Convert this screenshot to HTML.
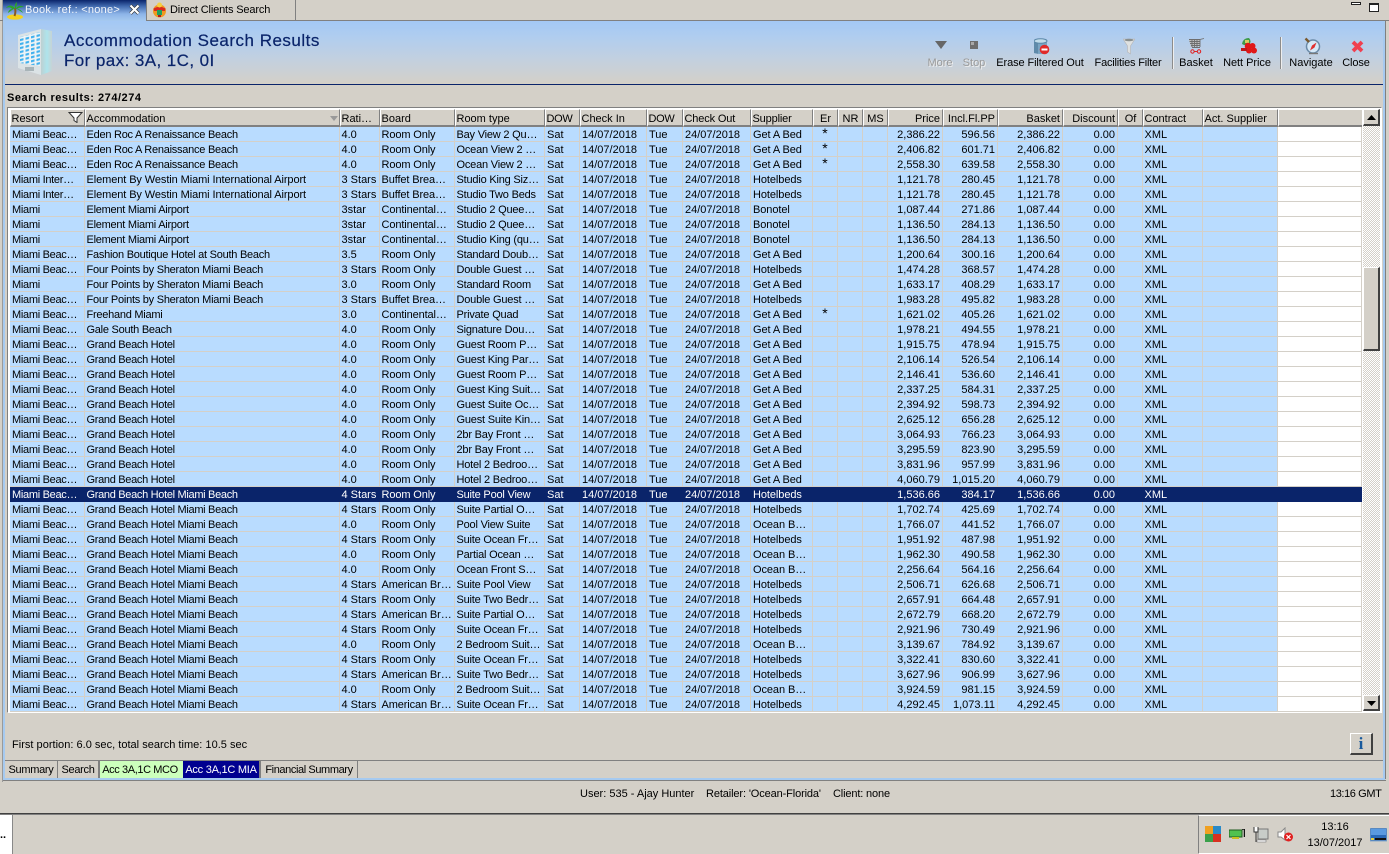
<!DOCTYPE html>
<html><head><meta charset="utf-8"><title>Accommodation Search Results</title>
<style>
html,body{margin:0;padding:0;width:1389px;height:854px;overflow:hidden;background:#d4d0c8;font:11px/14px "Liberation Sans",sans-serif;color:#000}
div,span,svg{position:absolute;display:block}
.t{white-space:nowrap}
.c{text-align:center}
.dis{color:#9a9a9a;text-shadow:1px 1px 0 #eee}
table{position:absolute;left:10px;top:109px;table-layout:fixed;border-collapse:separate;border-spacing:0;width:1352px}
td,th{box-sizing:border-box;white-space:nowrap;font-weight:normal;text-align:left;vertical-align:top}
th{height:18px;background:#d4d0c8;border-top:1px solid #fff;border-left:1px solid #fff;border-right:1px solid #808080;border-bottom:2px solid #808080;line-height:12px;padding:3px 0 0 .5px}
th.d{letter-spacing:-.3px}
th.n{letter-spacing:-.15px}
td{height:15px;background:#b9dcff;border-right:1px solid #d4d0c8;border-bottom:1px solid #d4d0c8;line-height:12px;padding:2px 0 0 2px}
td:nth-child(1){letter-spacing:-.3px}
td:nth-child(2){padding-left:1.5px;letter-spacing:-.25px}
td:nth-child(3){padding-left:1.5px}
td:nth-child(4){padding-left:1.5px;letter-spacing:-.12px}
td:nth-child(5){padding-left:1.5px;letter-spacing:-.2px}
td:nth-child(10){letter-spacing:-.08px}
td:nth-child(19){padding-left:1.5px}
td:nth-child(n+14):nth-child(-n+17){text-align:right;padding:2px 2px 0 0}
th.r{text-align:right;padding:3px 2px 0 0}
td:nth-child(11){text-align:center;padding:0;font-size:14px;line-height:13px}
th.m{text-align:center;padding:3px 0 0}
td:nth-child(21){background:#fff}
th:last-child{border-right:0}
tr.s td{background:#0a246a;color:#fff;border-right-color:#0a246a;border-bottom-color:#0a246a}
.w{letter-spacing:-.09px!important}
.g{letter-spacing:-.31px!important}
.btn{box-sizing:border-box;background:#d4d0c8;border-top:1px solid #fff;border-left:1px solid #fff;border-right:2px solid #404040;border-bottom:2px solid #404040}
.tab{top:761px;height:17px;line-height:19px;text-align:center;box-sizing:border-box;border-right:1px solid #808080;white-space:nowrap}
</style></head><body>

<!-- window chrome -->
<div style="left:2px;top:0;width:1px;height:782px;background:#9a9a9a"></div>
<div style="left:0;top:20px;width:1389px;height:1px;background:#808080"></div>
<div style="left:3px;top:21px;width:2px;height:758px;background:#a6caf0"></div>
<div style="left:1383px;top:21px;width:2px;height:758px;background:#a6caf0"></div>
<div style="left:1385px;top:21px;width:1px;height:758px;background:#808080"></div>
<div style="left:3px;top:778px;width:1382px;height:2px;background:#a6caf0"></div>
<div style="left:3px;top:780px;width:1383px;height:1px;background:#808080"></div>

<!-- tabs -->
<div style="left:3px;top:0;width:143px;height:21px;background:linear-gradient(#0a246a 0,#3f68ad 6px,#8db4e8 14px,#a6caf0 21px)"></div>
<svg style="left:5px;top:1px" width="22" height="20" viewBox="0 0 22 20"><ellipse cx="10" cy="16" rx="8" ry="2.6" fill="#f2d21e"/><path d="M10 7 Q11 11 9.500 15" stroke="#8a5a20" stroke-width="2" fill="none"/><path d="M10 7 Q5 2 1 7 Q5 5 7 8 Q4 8 3 12 Q7 9 10 7 Q9 3 12 1 Q12 4 11 7 Q15 3 19 6 Q15 6 12 8 Q16 8 18 12 Q14 9 10 7Z" fill="#2aa52a"/></svg>
<div class="t" style="left:25px;top:3px;color:#f2f6fc;letter-spacing:.25px">Book. ref.: &lt;none&gt;</div>
<svg style="left:128px;top:3px" width="13" height="13" viewBox="0 0 13 13"><path d="M2.500 2.500L10.500 10.500M10.500 2.500L2.500 10.500" stroke="#333" stroke-width="3.400"/><path d="M2.500 2.500L10.500 10.500M10.500 2.500L2.500 10.500" stroke="#fff" stroke-width="2.200"/></svg>
<div style="left:146px;top:0;width:150px;height:20px;box-sizing:border-box;border-left:1px solid #808080;border-right:1px solid #808080"></div>
<svg style="left:152px;top:2px" width="15" height="16" viewBox="0 0 15 16"><circle cx="7.500" cy="9" r="6.500" fill="#f09a20"/><path d="M1.500 6.500Q7.500 3 13.500 6.500L13 9H2Z" fill="#d92a20"/><rect x="5" y="8" width="5" height="5" fill="#20a060"/><circle cx="7.500" cy="3" r="2.500" fill="#f6d040"/><rect x="6" y="13" width="3" height="2" fill="#b02020"/></svg>
<div class="t" style="left:170px;top:3px;letter-spacing:-.15px">Direct Clients Search</div>
<div style="left:1351px;top:2px;width:8px;height:1px;border:1px solid #222;background:#fff"></div>
<div style="left:1369px;top:3px;width:8px;height:6px;border:1px solid #222;border-top:2px solid #222;background:#fff"></div>

<!-- header band -->
<div style="left:5px;top:21px;width:1378px;height:63px;background:linear-gradient(#a3c8f5 0,#b0cdef 25%,#c2d0e0 60%,#d4d0c8 100%)"></div>
<div style="left:5px;top:84px;width:1378px;height:1px;background:#0a246a"></div>
<svg style="left:17px;top:27px" width="37" height="49" viewBox="0 0 37 49"><defs><pattern id="win" width="5.500" height="4" patternUnits="userSpaceOnUse" patternTransform="translate(3 4) skewY(-14)"><rect width="5.500" height="4" fill="#eef3f5"/><rect width="3.500" height="2.200" fill="#3fb0ee"/></pattern><linearGradient id="sd" x1="0" x2="1"><stop offset="0" stop-color="#bdd0d2"/><stop offset=".55" stop-color="#aee4ec"/><stop offset="1" stop-color="#c6d3d5"/></linearGradient></defs><path d="M1 8L24 2V48L1 41Z" fill="#dbe3e6"/><path d="M3 10L23 5V39L3 36Z" fill="url(#win)"/><path d="M24 2L35 4V44L24 48Z" fill="url(#sd)"/><rect x="8" y="40" width="9" height="4" fill="#a8b4b8"/></svg>
<div class="t" style="left:64px;top:31px;font-size:17px;line-height:20px;color:#0a246a;letter-spacing:.5px;-webkit-text-stroke:.2px #0a246a">Accommodation Search Results</div>
<div class="t" style="left:64px;top:51px;font-size:17px;line-height:20px;color:#0a246a;letter-spacing:.42px;-webkit-text-stroke:.2px #0a246a">For pax: 3A, 1C, 0I</div>

<!-- toolbar icons -->
<svg style="left:935px;top:41px" width="13" height="9" viewBox="0 0 13 9"><path d="M0 0H12L6 8Z" fill="#666"/></svg>
<svg style="left:970px;top:41px" width="8" height="8" viewBox="0 0 8 8"><rect width="8" height="8" fill="#6e6e6e"/><rect x="1" y="1" width="3" height="3" fill="#a8a8a8"/></svg>
<svg style="left:1034px;top:38px" width="16" height="17" viewBox="0 0 16 17"><path d="M0 3H13V15Q6.500 17 0 15Z" fill="#7aa4c2"/><path d="M0 3H4V15.700Q2 15.500 0 15Z" fill="#5f8aaa"/><ellipse cx="6.500" cy="3" rx="6.500" ry="2.300" fill="#c2dcea" stroke="#5a87a8"/><circle cx="10.500" cy="11.500" r="4.800" fill="#e02a2a"/><rect x="7.500" y="10.500" width="6" height="2" fill="#fff"/></svg>
<svg style="left:1123px;top:38px" width="12" height="17" viewBox="0 0 12 17"><path d="M0 1H12L7.500 8V16L4.500 14V8Z" fill="#dfe1e1" stroke="#b5b5b5" stroke-width=".6"/><ellipse cx="6" cy="2" rx="4.500" ry="1.300" fill="#8a9090"/></svg>
<div style="left:1172px;top:37px;width:1px;height:32px;background:#8c8c8c;border-right:1px solid #eee"></div>
<svg style="left:1189px;top:38px" width="16" height="16" viewBox="0 0 16 16"><path d="M0 2H11V8L2 9Z" fill="#c0c0c0"/><path d="M0 1.500H11M.5 3.500H11M1 5.500H11M2 7.500H11M3 2V9M5.500 2V9M8 2V9M11 9V1.500L15 .5M11 9.500H3" stroke="#6e6e6e" stroke-width=".9" fill="none"/><circle cx="3.500" cy="13.500" r="1.700" fill="none" stroke="#e02020"/><circle cx="10" cy="13.500" r="1.700" fill="none" stroke="#e02020"/><path d="M5.500 13.500H8" stroke="#e02020"/></svg>
<svg style="left:1241px;top:38px" width="16" height="16" viewBox="0 0 16 16"><path d="M1 6Q2 0 8 0Q11 3 8 7H3Z" fill="#3f9c4a"/><rect x="4" y="2" width="4" height="3" fill="#d5d060"/><circle cx="7" cy="8" r="3.300" fill="#e01818"/><circle cx="11.500" cy="8" r="3" fill="#e01818"/><circle cx="13" cy="12.500" r="3" fill="#e01818"/><circle cx="8" cy="12.500" r="3" fill="#e01818"/><rect x="0" y="10" width="6" height="3" fill="#c01818"/></svg>
<div style="left:1280px;top:37px;width:1px;height:32px;background:#8c8c8c;border-right:1px solid #eee"></div>
<svg style="left:1304px;top:37px" width="17" height="18" viewBox="0 0 17 18"><circle cx="9" cy="9.500" r="6.500" fill="#d4e8f8" stroke="#6a8aa8" stroke-width="1.500"/><path d="M12.500 5.500L8 8.500L6 13.500L10.500 10.500Z" fill="#e03030"/><path d="M1.500 1.500L5 5" stroke="#7a5a30" stroke-width="2.400"/><path d="M5 16.500H14" stroke="#777" stroke-width="1.400"/></svg>
<svg style="left:1351px;top:40px" width="13" height="13" viewBox="0 0 13 13"><path d="M2 2L11 11M11 2L2 11" stroke="#f04050" stroke-width="3.800"/></svg>

<!-- toolbar labels -->
<div class="t c dis" style="left:920px;top:56px;width:40px">More</div>
<div class="t c dis" style="left:954px;top:56px;width:40px">Stop</div>
<div class="t c" style="left:990px;top:56px;width:100px;letter-spacing:-.1px">Erase Filtered Out</div>
<div class="t c" style="left:1078px;top:56px;width:100px;letter-spacing:-.2px">Facilities Filter</div>
<div class="t c" style="left:1176px;top:56px;width:40px">Basket</div>
<div class="t c" style="left:1217px;top:56px;width:60px;letter-spacing:-.05px">Nett Price</div>
<div class="t c" style="left:1285px;top:56px;width:52px">Navigate</div>
<div class="t c" style="left:1336px;top:56px;width:40px;letter-spacing:-.1px">Close</div>

<div class="t" style="left:7px;top:91px;font-weight:bold;letter-spacing:.53px">Search results: 274/274</div>

<!-- grid frame -->
<div style="left:7px;top:107px;width:1375px;height:606px;box-sizing:border-box;background:#fff;border-top:1px solid #808080;border-left:1px solid #808080;border-right:1px solid #fff;border-bottom:1px solid #fff"></div>
<div style="left:8px;top:108px;width:1373px;height:604px;overflow:hidden;background:#fff">
<table style="left:2px;top:1px">
<colgroup><col style="width:75px"><col style="width:255px"><col style="width:40px"><col style="width:75px"><col style="width:90px"><col style="width:35px"><col style="width:67px"><col style="width:36px"><col style="width:68px"><col style="width:62px"><col style="width:25px"><col style="width:25px"><col style="width:25px"><col style="width:55px"><col style="width:55px"><col style="width:65px"><col style="width:55px"><col style="width:25px"><col style="width:60px"><col style="width:75px"><col style="width:84px"></colgroup>
<tr><th>Resort<th>Accommodation<th>Rati…<th>Board<th>Room type<th class="d">DOW<th>Check In<th class="d">DOW<th class="n">Check Out<th class="n">Supplier<th class="m">Er<th class="m">NR<th class="m">MS<th class="r">Price<th class="r">Incl.Fl.PP<th class="r">Basket<th class="r">Discount<th class="m">Of<th>Contract<th>Act. Supplier<th></tr>
<tr><td>Miami Beac…<td>Eden Roc A Renaissance Beach<td>4.0<td>Room Only<td>Bay View 2 Qu…<td>Sat<td>14/07/2018<td>Tue<td>24/07/2018<td>Get A Bed<td>*<td><td><td>2,386.22<td>596.56<td>2,386.22<td>0.00<td><td>XML<td><td></tr>
<tr><td>Miami Beac…<td>Eden Roc A Renaissance Beach<td>4.0<td>Room Only<td>Ocean View 2 …<td>Sat<td>14/07/2018<td>Tue<td>24/07/2018<td>Get A Bed<td>*<td><td><td>2,406.82<td>601.71<td>2,406.82<td>0.00<td><td>XML<td><td></tr>
<tr><td>Miami Beac…<td>Eden Roc A Renaissance Beach<td>4.0<td>Room Only<td>Ocean View 2 …<td>Sat<td>14/07/2018<td>Tue<td>24/07/2018<td>Get A Bed<td>*<td><td><td>2,558.30<td>639.58<td>2,558.30<td>0.00<td><td>XML<td><td></tr>
<tr><td>Miami Inter…<td class="w">Element By Westin Miami International Airport<td>3 Stars<td>Buffet Brea…<td>Studio King Siz…<td>Sat<td>14/07/2018<td>Tue<td>24/07/2018<td>Hotelbeds<td><td><td><td>1,121.78<td>280.45<td>1,121.78<td>0.00<td><td>XML<td><td></tr>
<tr><td>Miami Inter…<td class="w">Element By Westin Miami International Airport<td>3 Stars<td>Buffet Brea…<td>Studio Two Beds<td>Sat<td>14/07/2018<td>Tue<td>24/07/2018<td>Hotelbeds<td><td><td><td>1,121.78<td>280.45<td>1,121.78<td>0.00<td><td>XML<td><td></tr>
<tr><td>Miami<td>Element Miami Airport<td>3star<td>Continental…<td>Studio 2 Quee…<td>Sat<td>14/07/2018<td>Tue<td>24/07/2018<td>Bonotel<td><td><td><td>1,087.44<td>271.86<td>1,087.44<td>0.00<td><td>XML<td><td></tr>
<tr><td>Miami<td>Element Miami Airport<td>3star<td>Continental…<td>Studio 2 Quee…<td>Sat<td>14/07/2018<td>Tue<td>24/07/2018<td>Bonotel<td><td><td><td>1,136.50<td>284.13<td>1,136.50<td>0.00<td><td>XML<td><td></tr>
<tr><td>Miami<td>Element Miami Airport<td>3star<td>Continental…<td>Studio King (qu…<td>Sat<td>14/07/2018<td>Tue<td>24/07/2018<td>Bonotel<td><td><td><td>1,136.50<td>284.13<td>1,136.50<td>0.00<td><td>XML<td><td></tr>
<tr><td>Miami Beac…<td>Fashion Boutique Hotel at South Beach<td>3.5<td>Room Only<td>Standard Doub…<td>Sat<td>14/07/2018<td>Tue<td>24/07/2018<td>Get A Bed<td><td><td><td>1,200.64<td>300.16<td>1,200.64<td>0.00<td><td>XML<td><td></tr>
<tr><td>Miami Beac…<td>Four Points by Sheraton Miami Beach<td>3 Stars<td>Room Only<td>Double Guest …<td>Sat<td>14/07/2018<td>Tue<td>24/07/2018<td>Hotelbeds<td><td><td><td>1,474.28<td>368.57<td>1,474.28<td>0.00<td><td>XML<td><td></tr>
<tr><td>Miami<td>Four Points by Sheraton Miami Beach<td>3.0<td>Room Only<td>Standard Room<td>Sat<td>14/07/2018<td>Tue<td>24/07/2018<td>Get A Bed<td><td><td><td>1,633.17<td>408.29<td>1,633.17<td>0.00<td><td>XML<td><td></tr>
<tr><td>Miami Beac…<td>Four Points by Sheraton Miami Beach<td>3 Stars<td>Buffet Brea…<td>Double Guest …<td>Sat<td>14/07/2018<td>Tue<td>24/07/2018<td>Hotelbeds<td><td><td><td>1,983.28<td>495.82<td>1,983.28<td>0.00<td><td>XML<td><td></tr>
<tr><td>Miami Beac…<td>Freehand Miami<td>3.0<td>Continental…<td>Private Quad<td>Sat<td>14/07/2018<td>Tue<td>24/07/2018<td>Get A Bed<td>*<td><td><td>1,621.02<td>405.26<td>1,621.02<td>0.00<td><td>XML<td><td></tr>
<tr><td>Miami Beac…<td>Gale South Beach<td>4.0<td>Room Only<td>Signature Dou…<td>Sat<td>14/07/2018<td>Tue<td>24/07/2018<td>Get A Bed<td><td><td><td>1,978.21<td>494.55<td>1,978.21<td>0.00<td><td>XML<td><td></tr>
<tr><td>Miami Beac…<td class="g">Grand Beach Hotel<td>4.0<td>Room Only<td>Guest Room P…<td>Sat<td>14/07/2018<td>Tue<td>24/07/2018<td>Get A Bed<td><td><td><td>1,915.75<td>478.94<td>1,915.75<td>0.00<td><td>XML<td><td></tr>
<tr><td>Miami Beac…<td class="g">Grand Beach Hotel<td>4.0<td>Room Only<td>Guest King Par…<td>Sat<td>14/07/2018<td>Tue<td>24/07/2018<td>Get A Bed<td><td><td><td>2,106.14<td>526.54<td>2,106.14<td>0.00<td><td>XML<td><td></tr>
<tr><td>Miami Beac…<td class="g">Grand Beach Hotel<td>4.0<td>Room Only<td>Guest Room P…<td>Sat<td>14/07/2018<td>Tue<td>24/07/2018<td>Get A Bed<td><td><td><td>2,146.41<td>536.60<td>2,146.41<td>0.00<td><td>XML<td><td></tr>
<tr><td>Miami Beac…<td class="g">Grand Beach Hotel<td>4.0<td>Room Only<td>Guest King Suit…<td>Sat<td>14/07/2018<td>Tue<td>24/07/2018<td>Get A Bed<td><td><td><td>2,337.25<td>584.31<td>2,337.25<td>0.00<td><td>XML<td><td></tr>
<tr><td>Miami Beac…<td class="g">Grand Beach Hotel<td>4.0<td>Room Only<td>Guest Suite Oc…<td>Sat<td>14/07/2018<td>Tue<td>24/07/2018<td>Get A Bed<td><td><td><td>2,394.92<td>598.73<td>2,394.92<td>0.00<td><td>XML<td><td></tr>
<tr><td>Miami Beac…<td class="g">Grand Beach Hotel<td>4.0<td>Room Only<td>Guest Suite Kin…<td>Sat<td>14/07/2018<td>Tue<td>24/07/2018<td>Get A Bed<td><td><td><td>2,625.12<td>656.28<td>2,625.12<td>0.00<td><td>XML<td><td></tr>
<tr><td>Miami Beac…<td class="g">Grand Beach Hotel<td>4.0<td>Room Only<td>2br Bay Front …<td>Sat<td>14/07/2018<td>Tue<td>24/07/2018<td>Get A Bed<td><td><td><td>3,064.93<td>766.23<td>3,064.93<td>0.00<td><td>XML<td><td></tr>
<tr><td>Miami Beac…<td class="g">Grand Beach Hotel<td>4.0<td>Room Only<td>2br Bay Front …<td>Sat<td>14/07/2018<td>Tue<td>24/07/2018<td>Get A Bed<td><td><td><td>3,295.59<td>823.90<td>3,295.59<td>0.00<td><td>XML<td><td></tr>
<tr><td>Miami Beac…<td class="g">Grand Beach Hotel<td>4.0<td>Room Only<td>Hotel 2 Bedroo…<td>Sat<td>14/07/2018<td>Tue<td>24/07/2018<td>Get A Bed<td><td><td><td>3,831.96<td>957.99<td>3,831.96<td>0.00<td><td>XML<td><td></tr>
<tr><td>Miami Beac…<td class="g">Grand Beach Hotel<td>4.0<td>Room Only<td>Hotel 2 Bedroo…<td>Sat<td>14/07/2018<td>Tue<td>24/07/2018<td>Get A Bed<td><td><td><td>4,060.79<td>1,015.20<td>4,060.79<td>0.00<td><td>XML<td><td></tr>
<tr class="s"><td>Miami Beac…<td class="g">Grand Beach Hotel Miami Beach<td>4 Stars<td>Room Only<td>Suite Pool View<td>Sat<td>14/07/2018<td>Tue<td>24/07/2018<td>Hotelbeds<td><td><td><td>1,536.66<td>384.17<td>1,536.66<td>0.00<td><td>XML<td><td></tr>
<tr><td>Miami Beac…<td class="g">Grand Beach Hotel Miami Beach<td>4 Stars<td>Room Only<td>Suite Partial O…<td>Sat<td>14/07/2018<td>Tue<td>24/07/2018<td>Hotelbeds<td><td><td><td>1,702.74<td>425.69<td>1,702.74<td>0.00<td><td>XML<td><td></tr>
<tr><td>Miami Beac…<td class="g">Grand Beach Hotel Miami Beach<td>4.0<td>Room Only<td>Pool View Suite<td>Sat<td>14/07/2018<td>Tue<td>24/07/2018<td>Ocean B…<td><td><td><td>1,766.07<td>441.52<td>1,766.07<td>0.00<td><td>XML<td><td></tr>
<tr><td>Miami Beac…<td class="g">Grand Beach Hotel Miami Beach<td>4 Stars<td>Room Only<td>Suite Ocean Fr…<td>Sat<td>14/07/2018<td>Tue<td>24/07/2018<td>Hotelbeds<td><td><td><td>1,951.92<td>487.98<td>1,951.92<td>0.00<td><td>XML<td><td></tr>
<tr><td>Miami Beac…<td class="g">Grand Beach Hotel Miami Beach<td>4.0<td>Room Only<td>Partial Ocean …<td>Sat<td>14/07/2018<td>Tue<td>24/07/2018<td>Ocean B…<td><td><td><td>1,962.30<td>490.58<td>1,962.30<td>0.00<td><td>XML<td><td></tr>
<tr><td>Miami Beac…<td class="g">Grand Beach Hotel Miami Beach<td>4.0<td>Room Only<td>Ocean Front S…<td>Sat<td>14/07/2018<td>Tue<td>24/07/2018<td>Ocean B…<td><td><td><td>2,256.64<td>564.16<td>2,256.64<td>0.00<td><td>XML<td><td></tr>
<tr><td>Miami Beac…<td class="g">Grand Beach Hotel Miami Beach<td>4 Stars<td>American Br…<td>Suite Pool View<td>Sat<td>14/07/2018<td>Tue<td>24/07/2018<td>Hotelbeds<td><td><td><td>2,506.71<td>626.68<td>2,506.71<td>0.00<td><td>XML<td><td></tr>
<tr><td>Miami Beac…<td class="g">Grand Beach Hotel Miami Beach<td>4 Stars<td>Room Only<td>Suite Two Bedr…<td>Sat<td>14/07/2018<td>Tue<td>24/07/2018<td>Hotelbeds<td><td><td><td>2,657.91<td>664.48<td>2,657.91<td>0.00<td><td>XML<td><td></tr>
<tr><td>Miami Beac…<td class="g">Grand Beach Hotel Miami Beach<td>4 Stars<td>American Br…<td>Suite Partial O…<td>Sat<td>14/07/2018<td>Tue<td>24/07/2018<td>Hotelbeds<td><td><td><td>2,672.79<td>668.20<td>2,672.79<td>0.00<td><td>XML<td><td></tr>
<tr><td>Miami Beac…<td class="g">Grand Beach Hotel Miami Beach<td>4 Stars<td>Room Only<td>Suite Ocean Fr…<td>Sat<td>14/07/2018<td>Tue<td>24/07/2018<td>Hotelbeds<td><td><td><td>2,921.96<td>730.49<td>2,921.96<td>0.00<td><td>XML<td><td></tr>
<tr><td>Miami Beac…<td class="g">Grand Beach Hotel Miami Beach<td>4.0<td>Room Only<td>2 Bedroom Suit…<td>Sat<td>14/07/2018<td>Tue<td>24/07/2018<td>Ocean B…<td><td><td><td>3,139.67<td>784.92<td>3,139.67<td>0.00<td><td>XML<td><td></tr>
<tr><td>Miami Beac…<td class="g">Grand Beach Hotel Miami Beach<td>4 Stars<td>Room Only<td>Suite Ocean Fr…<td>Sat<td>14/07/2018<td>Tue<td>24/07/2018<td>Hotelbeds<td><td><td><td>3,322.41<td>830.60<td>3,322.41<td>0.00<td><td>XML<td><td></tr>
<tr><td>Miami Beac…<td class="g">Grand Beach Hotel Miami Beach<td>4 Stars<td>American Br…<td>Suite Two Bedr…<td>Sat<td>14/07/2018<td>Tue<td>24/07/2018<td>Hotelbeds<td><td><td><td>3,627.96<td>906.99<td>3,627.96<td>0.00<td><td>XML<td><td></tr>
<tr><td>Miami Beac…<td class="g">Grand Beach Hotel Miami Beach<td>4.0<td>Room Only<td>2 Bedroom Suit…<td>Sat<td>14/07/2018<td>Tue<td>24/07/2018<td>Ocean B…<td><td><td><td>3,924.59<td>981.15<td>3,924.59<td>0.00<td><td>XML<td><td></tr>
<tr><td>Miami Beac…<td class="g">Grand Beach Hotel Miami Beach<td>4 Stars<td>American Br…<td>Suite Ocean Fr…<td>Sat<td>14/07/2018<td>Tue<td>24/07/2018<td>Hotelbeds<td><td><td><td>4,292.45<td>1,073.11<td>4,292.45<td>0.00<td><td>XML<td><td></tr>
</table>
</div>
<svg style="left:68px;top:112px" width="15" height="11" viewBox="0 0 15 11"><path d="M1 .5H14L9 6V10.500L6 8.500V6Z" fill="#fff" stroke="#333"/></svg>
<svg style="left:330px;top:116px" width="8" height="5" viewBox="0 0 8 5"><path d="M0 0H8L4 5Z" fill="#999"/></svg>

<!-- scrollbar -->
<div style="left:1363px;top:109px;width:17px;height:602px;background:repeating-conic-gradient(#d4d0c8 0 25%,#fff 0 50%) 0 0/2px 2px"></div>
<div class="btn" style="left:1363px;top:109px;width:17px;height:17px"></div>
<svg style="left:1367px;top:115px" width="9" height="5" viewBox="0 0 9 5"><path d="M4.500 0L9 5H0Z" fill="#000"/></svg>
<div class="btn" style="left:1363px;top:267px;width:17px;height:84px"></div>
<div class="btn" style="left:1363px;top:695px;width:17px;height:16px"></div>
<svg style="left:1367px;top:701px" width="9" height="5" viewBox="0 0 9 5"><path d="M4.500 5L9 0H0Z" fill="#000"/></svg>

<!-- footer -->
<div class="t" style="left:12px;top:738px;letter-spacing:.02px">First portion: 6.0 sec, total search time: 10.5 sec</div>
<div class="btn" style="left:1350px;top:733px;width:23px;height:22px"></div>
<div class="t c" style="left:1350px;top:734px;width:22px;font:bold 17px/20px 'Liberation Serif',serif;color:#1a5a9c">i</div>
<div style="left:5px;top:760px;width:1378px;height:1px;background:#808080"></div>
<div class="tab" style="left:5px;width:53px;letter-spacing:-.3px">Summary</div>
<div class="tab" style="left:58px;width:41px;letter-spacing:-.3px">Search</div>
<div class="tab" style="left:99px;width:84px;background:#ccffbc;border-left:1px solid #808080;border-right:0;letter-spacing:-.4px;padding-right:3px">Acc 3A,1C MCO</div>
<div class="tab" style="left:183px;width:78px;background:#000090;color:#fff;border-right:2px solid #808080;letter-spacing:-.25px">Acc 3A,1C MIA</div>
<div class="tab" style="left:261px;width:97px;letter-spacing:-.4px">Financial Summary</div>

<!-- status -->
<div class="t" style="left:580px;top:787px">User: 535 - Ajay Hunter</div>
<div class="t" style="left:706px;top:787px;letter-spacing:-.12px">Retailer: 'Ocean-Florida'</div>
<div class="t" style="left:833px;top:787px;letter-spacing:-.15px">Client: none</div>
<div class="t" style="left:1330px;top:787px;letter-spacing:-.4px">13:16 GMT</div>

<!-- taskbar -->
<div style="left:0;top:813px;width:1389px;height:1px;background:#404040"></div>
<div style="left:0;top:814px;width:1389px;height:1px;background:#808080"></div>
<div style="left:0;top:815px;width:12px;height:39px;background:#fff;border-right:1px solid #888"></div>
<div class="t" style="left:0;top:828px;font-weight:bold">..</div>
<div style="left:1198px;top:815px;width:191px;height:39px;box-sizing:border-box;border-left:1px solid #808080;border-top:1px solid #fff;border-bottom:1px solid #fff"></div>
<svg style="left:1205px;top:826px" width="16" height="17" viewBox="0 0 16 17"><rect width="8" height="8" fill="#f0a020"/><rect x="8" width="8" height="8" fill="#2a8ac8"/><rect y="8" width="8" height="8" fill="#3aa04a"/><rect x="8" y="8" width="8" height="8" fill="#d83020"/></svg>
<svg style="left:1229px;top:829px" width="16" height="11" viewBox="0 0 16 11"><rect y="1" width="13" height="7" fill="#4fc24f" stroke="#1f5a1f"/><rect x="3" y="8" width="7" height="2" fill="#c8c020"/><path d="M13 0H15.500V8" fill="none" stroke="#111" stroke-width="1.500"/></svg>
<svg style="left:1253px;top:826px" width="16" height="17" viewBox="0 0 16 17"><rect x="5" y="3" width="10" height="10" fill="#c8ccc8" stroke="#777"/><rect x="4" y="14" width="9" height="2" fill="#fff" stroke="#777" stroke-width=".6"/><path d="M1 1V6H5V1M3 6V16" fill="#fff" stroke="#333"/></svg>
<svg style="left:1277px;top:827px" width="17" height="16" viewBox="0 0 17 16"><path d="M1 5H4L8 1V13L4 10H1Z" fill="#fff" stroke="#888"/><circle cx="11.500" cy="10" r="4.500" fill="#e02020"/><path d="M9.500 8L13.500 12M13.500 8L9.500 12" stroke="#fff" stroke-width="1.200"/></svg>
<div class="t c" style="left:1305px;top:820px;width:60px">13:16</div>
<div class="t c" style="left:1303px;top:836px;width:64px">13/07/2017</div>
<svg style="left:1370px;top:828px" width="17" height="15" viewBox="0 0 17 15"><rect width="17" height="13" fill="#2a6ab8" stroke="#88a8c8"/><rect x="1" y="1" width="15" height="6" fill="#5a9ae0"/><rect x="5" y="10" width="11" height="2" fill="#111"/><rect x="1" y="10" width="3" height="2" fill="#e8d040"/></svg>
</body></html>
